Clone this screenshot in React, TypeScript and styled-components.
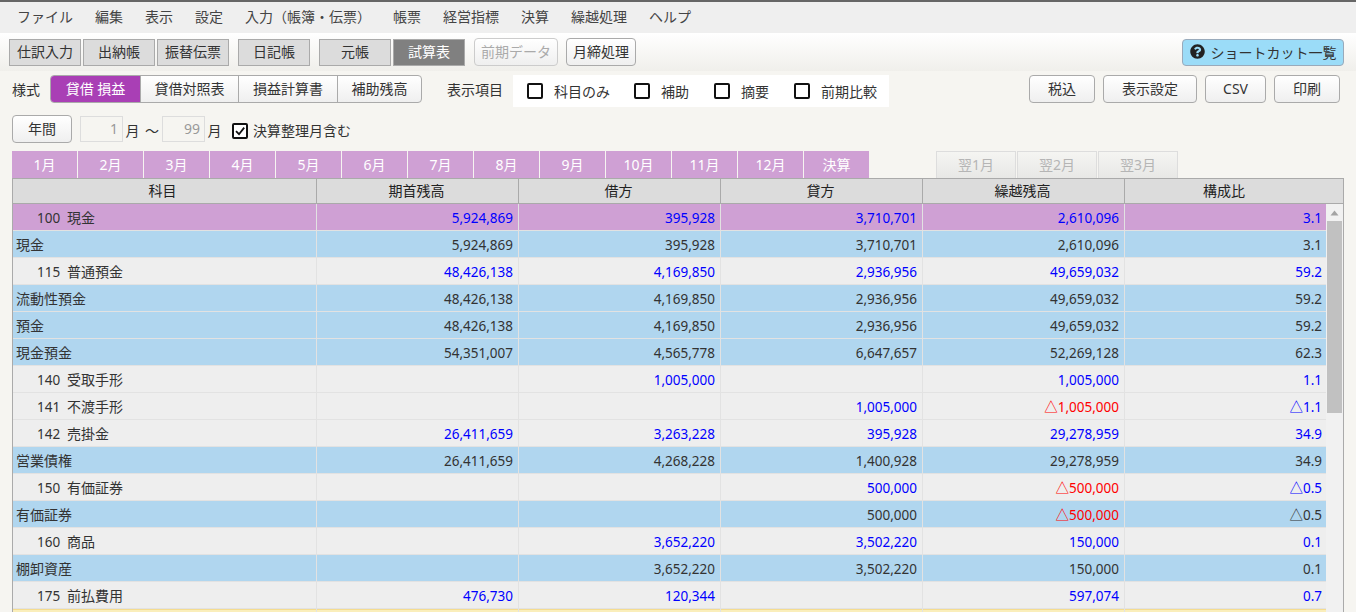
import React from 'react';
import styled, { createGlobalStyle, css } from 'styled-components';
import { FaQuestionCircle } from 'react-icons/fa';

const GlobalStyle = createGlobalStyle`
  html, body {
    margin: 0;
    height: 100%;
    overflow: hidden;
  }
  body {
    background-color: #f6f5f1;
    color: #333;
    font-family: 'Noto Sans', 'Noto Sans CJK JP', sans-serif;
    font-size: 14px;
  }
`;

const Page = styled.div`
  display: flex;
  flex-direction: column;
  height: 612px;
  overflow: hidden;
`;

const MenuBar = styled.div`
  display: flex;
  align-items: center;
  height: 33px;
  flex-shrink: 0;
  box-sizing: border-box;
  padding: 0 0 3px 17px;
  border-top: 2px solid #666;
  background-color: #efefef;
`;

const MenuItem = styled.span`
  margin-right: 22px;
  color: #444;
  white-space: nowrap;
`;

const Toolbar = styled.div`
  display: flex;
  align-items: center;
  height: 38px;
  flex-shrink: 0;
  padding: 0 12px 0 9px;
  box-sizing: border-box;
  background: linear-gradient(#ffffff, #f0efeb);
`;

const ToolGroup = styled.div`
  display: flex;
  gap: 2px;
  margin-right: 9px;
`;

const ToolButton = styled.div<{ $active?: boolean }>`
  width: 72px;
  height: 27px;
  box-sizing: border-box;
  display: flex;
  align-items: center;
  justify-content: center;
  padding-bottom: 2px;
  border: 1px solid #aaa;
  background-color: ${({ $active }) => ($active ? '#808080' : '#dcdcdc')};
  color: ${({ $active }) => ($active ? '#fff' : '#333')};
`;

const RoundButton = styled.div<{ $width: number; $disabled?: boolean }>`
  width: ${({ $width }) => $width}px;
  height: 28px;
  box-sizing: border-box;
  display: flex;
  align-items: center;
  justify-content: center;
  padding-bottom: 2px;
  border: 1px solid ${({ $disabled }) => ($disabled ? '#ccc' : '#aaa')};
  border-radius: 4px;
  background: linear-gradient(#ffffff, #efefef);
  color: ${({ $disabled }) => ($disabled ? '#aaa' : '#333')};
  margin-right: 8px;
  flex-shrink: 0;
`;

const ShortcutButton = styled.div`
  margin-left: auto;
  width: 162px;
  height: 27px;
  box-sizing: border-box;
  display: flex;
  align-items: center;
  justify-content: center;
  gap: 6px;
  padding-bottom: 1px;
  border: 1px solid #9ab;
  border-radius: 4px;
  background-color: #9bdcf8;
  color: #333;
`;

const StyleRow = styled.div`
  display: flex;
  align-items: flex-start;
  height: 32px;
  flex-shrink: 0;
  margin-top: 4px;
  padding-left: 12px;
`;

const RowLabel = styled.span<{ $left?: number; $width: number }>`
  width: ${({ $width }) => $width}px;
  margin-left: ${({ $left }) => $left ?? 0}px;
  height: 28px;
  line-height: 30px;
  flex-shrink: 0;
`;

const Segmented = styled.div`
  display: flex;
  height: 28px;
  box-sizing: border-box;
  border: 1px solid #aaa;
  border-radius: 4px;
  overflow: hidden;
  background: linear-gradient(#ffffff, #efefef);
`;

const Segment = styled.div<{ $width: number; $active?: boolean }>`
  width: ${({ $width }) => $width}px;
  display: flex;
  align-items: center;
  justify-content: center;
  padding-bottom: 2px;
  & + & {
    border-left: 1px solid #aaa;
  }
  ${({ $active }) =>
    $active &&
    css`
      background-color: #a93fb5;
      color: #fff;
    `}
`;

const CheckPanel = styled.div`
  display: flex;
  align-items: center;
  width: 376px;
  height: 32px;
  box-sizing: border-box;
  padding-left: 14px;
  margin-left: 9px;
  background-color: #fff;
`;

const CheckBox = styled.span<{ $top?: number }>`
  width: 16px;
  height: 16px;
  box-sizing: border-box;
  flex-shrink: 0;
  display: inline-flex;
  align-items: center;
  justify-content: center;
  margin-top: ${({ $top }) => $top ?? 0}px;
  border: 2px solid #111;
  border-radius: 2px;
  background-color: #fff;
`;

const CheckLabel = styled.span<{ $width: number }>`
  width: ${({ $width }) => $width}px;
  margin-left: 11px;
  padding-bottom: 1px;
  white-space: nowrap;
`;

const RightButtons = styled.div`
  display: flex;
  margin-left: auto;
  margin-right: 8px;
`;

const PeriodRow = styled.div`
  display: flex;
  align-items: center;
  height: 28px;
  flex-shrink: 0;
  margin-top: 8px;
  padding-left: 12px;
`;

const MonthInput = styled.div`
  width: 43px;
  height: 26px;
  box-sizing: border-box;
  padding-right: 4px;
  line-height: 23px;
  text-align: right;
  border: 1px solid #ddd;
  color: #999;
`;

const PeriodText = styled.span<{ $width: number }>`
  width: ${({ $width }) => $width}px;
  padding-top: 1px;
  text-align: center;
  white-space: nowrap;
`;

const PeriodCheckLabel = styled.span`
  margin-left: 5px;
  padding-top: 1px;
`;

const CheckGap = styled.span`
  width: 8px;
`;

const TabRow = styled.div`
  display: flex;
  height: 27px;
  flex-shrink: 0;
  margin-top: 8px;
  padding-left: 12px;
`;

const MonthTab = styled.div`
  width: 65px;
  margin-right: 1px;
  display: flex;
  align-items: center;
  justify-content: center;
  padding-bottom: 2px;
  background-color: #cfa0d4;
  color: #fff;
`;

const NextTabs = styled.div`
  display: flex;
  gap: 1px;
  margin-left: 66px;
`;

const NextTab = styled.div`
  width: 80px;
  box-sizing: border-box;
  display: flex;
  align-items: center;
  justify-content: center;
  padding-bottom: 2px;
  border: 1px solid #ddd;
  border-bottom: none;
  background: linear-gradient(#f5f5f2, #e8e8e6);
  color: #b5b5b5;
`;

const TableFrame = styled.div`
  flex: 1;
  min-height: 0;
  width: 1332px;
  margin-left: 12px;
  box-sizing: border-box;
  border-left: 1px solid #aaa;
  border-right: 1px solid #aaa;
  display: flex;
  flex-direction: column;
`;

const HeaderRow = styled.div`
  display: grid;
  grid-template-columns: 303px 202px 202px 202px 202px 1fr;
  height: 26px;
  flex-shrink: 0;
  box-sizing: border-box;
  border-top: 1px solid #aaa;
  border-bottom: 1px solid #aaa;
  background-color: #dcdcdc;
`;

const HeaderCell = styled.div`
  box-sizing: border-box;
  padding-right: 2px;
  line-height: 23px;
  text-align: center;
  color: #222;
  & + & {
    border-left: 1px solid #aaa;
  }
  &:first-child {
    padding-right: 4px;
  }
  &:last-child {
    padding-right: 20px;
  }
`;

const TableBody = styled.div`
  flex: 1;
  min-height: 0;
  display: flex;
`;

const Rows = styled.div`
  flex: 1;
  min-width: 0;
`;

const rowColors = {
  current: '#cfa0d4',
  summary: '#b0d6ef',
  detail: '#eeeeee',
  warning: '#faeebb',
};

type RowKind = keyof typeof rowColors;

const Row = styled.div<{ $kind: RowKind }>`
  display: grid;
  grid-template-columns: 303px 202px 202px 202px 202px 1fr;
  height: 27px;
  box-sizing: border-box;
  border-bottom: 1px solid ${({ $kind }) => ($kind === 'warning' ? '#f5dc8f' : '#e2e2e2')};
  background-color: ${({ $kind }) => rowColors[$kind]};
  color: ${({ $kind }) => ($kind === 'summary' ? '#333' : '#00f')};
  ${({ $kind }) => $kind === 'warning' && css`border-top: 1px solid #f5dc8f;`}
`;

const NameCell = styled.div<{ $indent?: boolean }>`
  display: flex;
  padding-left: ${({ $indent }) => ($indent ? 24 : 3)}px;
  line-height: 28px;
  color: #333;
`;

const Code = styled.span`
  width: 30px;
  font-size: 13.5px;
`;

const NumCell = styled.div<{ $negative?: boolean }>`
  box-sizing: border-box;
  padding-right: 5px;
  line-height: 28px;
  font-size: 13.5px;
  text-align: right;
  border-left: 1px solid #e2e2e2;
  &:last-child {
    padding-right: 4px;
  }
  ${({ $negative }) => $negative && css`color: #f00;`}
`;

const ScrollBar = styled.div`
  width: 17px;
  flex-shrink: 0;
  display: flex;
  flex-direction: column;
  background-color: #f1f1f1;
`;

const ScrollArrow = styled.div`
  height: 17px;
  display: flex;
  align-items: center;
  justify-content: center;
`;

const ScrollThumb = styled.div`
  height: 192px;
  margin: 0 1px;
  background-color: #c1c1c1;
`;

type Data = {
  kind: RowKind;
  code?: string;
  name: string;
  values: string[];
};

const rows: Data[] = [
  { kind: 'current', code: '100', name: '現金', values: ['5,924,869', '395,928', '3,710,701', '2,610,096', '3.1'] },
  { kind: 'summary', name: '現金', values: ['5,924,869', '395,928', '3,710,701', '2,610,096', '3.1'] },
  { kind: 'detail', code: '115', name: '普通預金', values: ['48,426,138', '4,169,850', '2,936,956', '49,659,032', '59.2'] },
  { kind: 'summary', name: '流動性預金', values: ['48,426,138', '4,169,850', '2,936,956', '49,659,032', '59.2'] },
  { kind: 'summary', name: '預金', values: ['48,426,138', '4,169,850', '2,936,956', '49,659,032', '59.2'] },
  { kind: 'summary', name: '現金預金', values: ['54,351,007', '4,565,778', '6,647,657', '52,269,128', '62.3'] },
  { kind: 'detail', code: '140', name: '受取手形', values: ['', '1,005,000', '', '1,005,000', '1.1'] },
  { kind: 'detail', code: '141', name: '不渡手形', values: ['', '', '1,005,000', '△1,005,000', '△1.1'] },
  { kind: 'detail', code: '142', name: '売掛金', values: ['26,411,659', '3,263,228', '395,928', '29,278,959', '34.9'] },
  { kind: 'summary', name: '営業債権', values: ['26,411,659', '4,268,228', '1,400,928', '29,278,959', '34.9'] },
  { kind: 'detail', code: '150', name: '有価証券', values: ['', '', '500,000', '△500,000', '△0.5'] },
  { kind: 'summary', name: '有価証券', values: ['', '', '500,000', '△500,000', '△0.5'] },
  { kind: 'detail', code: '160', name: '商品', values: ['', '3,652,220', '3,502,220', '150,000', '0.1'] },
  { kind: 'summary', name: '棚卸資産', values: ['', '3,652,220', '3,502,220', '150,000', '0.1'] },
  { kind: 'detail', code: '175', name: '前払費用', values: ['476,730', '120,344', '', '597,074', '0.7'] },
  { kind: 'warning', name: '', values: ['', '', '', '', ''] },
];

const months = ['1月', '2月', '3月', '4月', '5月', '6月', '7月', '8月', '9月', '10月', '11月', '12月', '決算'];

const CheckMark = () => (
  <svg width="12" height="12" viewBox="0 0 12 12">
    <path d="M2 6.2 L5 9.2 L10.2 2.6" fill="none" stroke="#111" strokeWidth="1.8" />
  </svg>
);

const App: React.FC = () => {
  return (
    <Page>
      <GlobalStyle />
      <MenuBar>
        <MenuItem>ファイル</MenuItem>
        <MenuItem>編集</MenuItem>
        <MenuItem>表示</MenuItem>
        <MenuItem>設定</MenuItem>
        <MenuItem>入力（帳簿・伝票）</MenuItem>
        <MenuItem>帳票</MenuItem>
        <MenuItem>経営指標</MenuItem>
        <MenuItem>決算</MenuItem>
        <MenuItem>繰越処理</MenuItem>
        <MenuItem>ヘルプ</MenuItem>
      </MenuBar>

      <Toolbar>
        <ToolGroup>
          <ToolButton>仕訳入力</ToolButton>
          <ToolButton>出納帳</ToolButton>
          <ToolButton>振替伝票</ToolButton>
        </ToolGroup>
        <ToolGroup>
          <ToolButton>日記帳</ToolButton>
        </ToolGroup>
        <ToolGroup>
          <ToolButton>元帳</ToolButton>
          <ToolButton $active>試算表</ToolButton>
        </ToolGroup>
        <RoundButton $width={84} $disabled>前期データ</RoundButton>
        <RoundButton $width={70}>月締処理</RoundButton>
        <ShortcutButton>
          <FaQuestionCircle size={15} color="#222" />
          ショートカット一覧
        </ShortcutButton>
      </Toolbar>

      <StyleRow>
        <RowLabel $width={38}>様式</RowLabel>
        <Segmented>
          <Segment $width={89} $active>貸借 損益</Segment>
          <Segment $width={97}>貸借対照表</Segment>
          <Segment $width={98}>損益計算書</Segment>
          <Segment $width={83}>補助残高</Segment>
        </Segmented>
        <RowLabel $left={25} $width={57}>表示項目</RowLabel>
        <CheckPanel>
          <CheckBox />
          <CheckLabel $width={80}>科目のみ</CheckLabel>
          <CheckBox />
          <CheckLabel $width={53}>補助</CheckLabel>
          <CheckBox />
          <CheckLabel $width={53}>摘要</CheckLabel>
          <CheckBox />
          <CheckLabel $width={56}>前期比較</CheckLabel>
        </CheckPanel>
        <RightButtons>
          <RoundButton $width={66}>税込</RoundButton>
          <RoundButton $width={94}>表示設定</RoundButton>
          <RoundButton $width={61}>CSV</RoundButton>
          <RoundButton $width={66}>印刷</RoundButton>
        </RightButtons>
      </StyleRow>

      <PeriodRow>
        <RoundButton $width={60}>年間</RoundButton>
        <MonthInput>1</MonthInput>
        <PeriodText $width={19}>月</PeriodText>
        <PeriodText $width={20}>～</PeriodText>
        <MonthInput>99</MonthInput>
        <PeriodText $width={19}>月</PeriodText>
        <CheckGap />
        <CheckBox $top={3}>
          <CheckMark />
        </CheckBox>
        <PeriodCheckLabel>決算整理月含む</PeriodCheckLabel>
      </PeriodRow>

      <TabRow>
        {months.map((month) => (
          <MonthTab key={month}>{month}</MonthTab>
        ))}
        <NextTabs>
          <NextTab>翌1月</NextTab>
          <NextTab>翌2月</NextTab>
          <NextTab>翌3月</NextTab>
        </NextTabs>
      </TabRow>

      <TableFrame>
        <HeaderRow>
          <HeaderCell>科目</HeaderCell>
          <HeaderCell>期首残高</HeaderCell>
          <HeaderCell>借方</HeaderCell>
          <HeaderCell>貸方</HeaderCell>
          <HeaderCell>繰越残高</HeaderCell>
          <HeaderCell>構成比</HeaderCell>
        </HeaderRow>
        <TableBody>
          <Rows>
            {rows.map((row, index) => (
              <Row key={index} $kind={row.kind}>
                <NameCell $indent={!!row.code}>
                  {row.code && <Code>{row.code}</Code>}
                  {row.name}
                </NameCell>
                {row.values.map((value, i) => (
                  <NumCell key={i} $negative={i === 3 && value.startsWith('△')}>
                    {value}
                  </NumCell>
                ))}
              </Row>
            ))}
          </Rows>
          <ScrollBar>
            <ScrollArrow>
              <svg width="9" height="6" viewBox="0 0 9 6">
                <path d="M4.5 0.5 L8.5 5.5 L0.5 5.5 Z" fill="#a3a3a3" />
              </svg>
            </ScrollArrow>
            <ScrollThumb />
          </ScrollBar>
        </TableBody>
      </TableFrame>
    </Page>
  );
};

export default App;
